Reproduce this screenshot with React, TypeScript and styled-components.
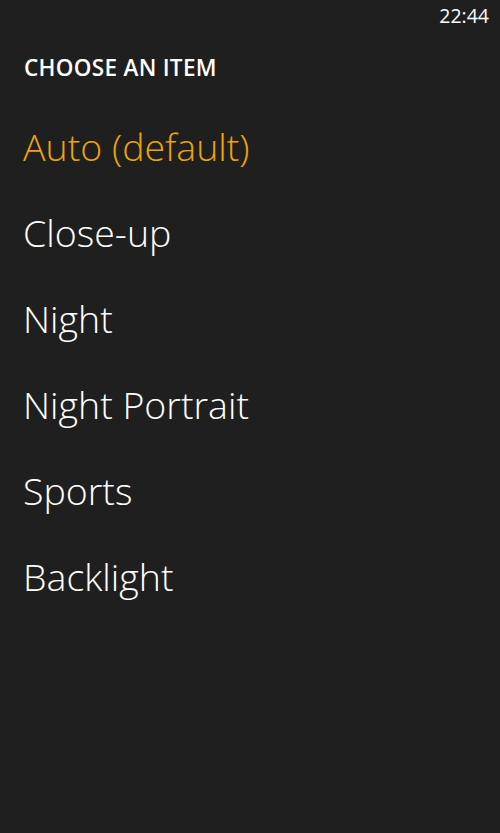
import React, { useState } from 'react'
import styled, { createGlobalStyle } from 'styled-components'

const GlobalStyle = createGlobalStyle`
  html, body {
    margin: 0;
    padding: 0;
    background: #1f1f1f;
  }
  #root {
    min-height: 833px;
  }
`

const Screen = styled.div`
  width: 500px;
  height: 833px;
  background: #1f1f1f;
  color: #ffffff;
  font-family: 'Open Sans', 'Segoe UI', sans-serif;
  display: flex;
  flex-direction: column;
  overflow: hidden;
`

const StatusBar = styled.div`
  height: 36px;
  display: flex;
  justify-content: flex-end;
  align-items: flex-start;
  padding: 2px 11px 0 0;
  box-sizing: border-box;
  font-size: 19.5px;
  font-weight: 400;
`

const Header = styled.h2`
  margin: 19px 0 0 24px;
  font-size: 22.5px;
  font-weight: 600;
  letter-spacing: 0.3px;
  line-height: 26px;
`

const List = styled.ul`
  list-style: none;
  margin: 41px 0 0;
  padding: 0 0 0 23px;
  display: flex;
  flex-direction: column;
`

const Item = styled.li<{ $active: boolean }>`
  height: 86px;
  font-size: 37.5px;
  font-weight: 300;
  line-height: 50px;
  color: ${({ $active }) => ($active ? '#f0a30a' : '#ffffff')};
  cursor: pointer;
`

const modes = ['Auto (default)', 'Close-up', 'Night', 'Night Portrait', 'Sports', 'Backlight']

export default function App() {
  const [selected, setSelected] = useState(0)

  return (
    <>
      <GlobalStyle />
      <Screen>
        <StatusBar>22:44</StatusBar>
        <Header>CHOOSE AN ITEM</Header>
        <List>
          {modes.map((m, i) => (
            <Item key={m} $active={i === selected} onClick={() => setSelected(i)}>
              {m}
            </Item>
          ))}
        </List>
      </Screen>
    </>
  )
}
